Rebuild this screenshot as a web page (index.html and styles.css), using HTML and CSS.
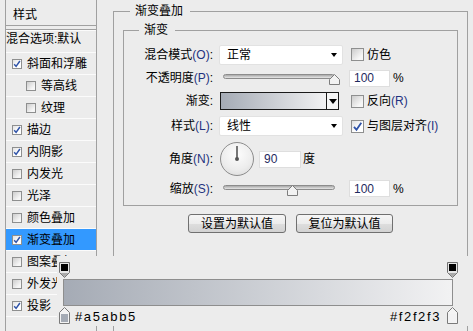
FILE: index.html
```html
<!DOCTYPE html>
<html lang="zh-CN">
<head>
    <meta charset="UTF-8" />
    <title>图层样式 - 渐变叠加</title>
    <link rel="stylesheet" href="styles.css">
</head>
<body>
<div class="dialog">
    <!-- Style list -->
    <ul class="style-list">
        <li class="item head">样式</li>
        <li class="item blend">混合选项:默认</li>
        <li class="item"><span class="cb on"><svg viewBox="0 0 8 8"><path d="M1.2 4.2l1.9 2.2L6.9 1" fill="none" stroke="#2f53a8" stroke-width="1.5"/></svg></span>斜面和浮雕</li>
        <li class="item sub"><span class="cb"></span>等高线</li>
        <li class="item sub"><span class="cb"></span>纹理</li>
        <li class="item"><span class="cb on"><svg viewBox="0 0 8 8"><path d="M1.2 4.2l1.9 2.2L6.9 1" fill="none" stroke="#2f53a8" stroke-width="1.5"/></svg></span>描边</li>
        <li class="item"><span class="cb on"><svg viewBox="0 0 8 8"><path d="M1.2 4.2l1.9 2.2L6.9 1" fill="none" stroke="#2f53a8" stroke-width="1.5"/></svg></span>内阴影</li>
        <li class="item"><span class="cb"></span>内发光</li>
        <li class="item"><span class="cb"></span>光泽</li>
        <li class="item"><span class="cb"></span>颜色叠加</li>
        <li class="item active"><span class="cb on"><svg viewBox="0 0 8 8"><path d="M1.2 4.2l1.9 2.2L6.9 1" fill="none" stroke="#2f53a8" stroke-width="1.5"/></svg></span>渐变叠加</li>
        <li class="item"><span class="cb"></span>图案叠加</li>
        <li class="item"><span class="cb"></span>外发光</li>
        <li class="item"><span class="cb on"><svg viewBox="0 0 8 8"><path d="M1.2 4.2l1.9 2.2L6.9 1" fill="none" stroke="#2f53a8" stroke-width="1.5"/></svg></span>投影</li>
    </ul>

    <!-- Settings -->
    <div class="settings">
        <fieldset class="group outer">
            <legend>渐变叠加</legend>
            <fieldset class="group inner">
                <legend>渐变</legend>

                <div class="row r-blend">
                    <span class="lbl">混合模式<span class="key">(O)</span>:</span>
                    <div class="select"><span>正常</span><i class="caret"></i></div>
                    <span class="check"><span class="box"></span>仿色</span>
                </div>

                <div class="row r-opacity">
                    <span class="lbl">不透明度<span class="key">(P)</span>:</span>
                    <div class="slider">
                        <div class="track"></div>
                        <svg class="thumb" style="left: 106px" width="11" height="11" viewBox="0 0 11 11"><path d="M.5 10.5v-5l5-5 5 5v5z" fill="#f2f2f2" stroke="#7d7d7d"/></svg>
                    </div>
                    <input class="num" type="text" value="100">
                    <span class="unit">%</span>
                </div>

                <div class="row r-grad">
                    <span class="lbl">渐变:</span>
                    <div class="grad-pick">
                        <div class="grad-swatch"></div>
                        <div class="grad-btn"><i class="caret big"></i></div>
                    </div>
                    <span class="check"><span class="box"></span>反向<span class="key">(R)</span></span>
                </div>

                <div class="row r-style">
                    <span class="lbl">样式<span class="key">(L)</span>:</span>
                    <div class="select"><span>线性</span><i class="caret"></i></div>
                    <span class="check"><span class="box on"><svg viewBox="0 0 11 11"><path d="M2 5.8l2.5 3L9.3 1.8" fill="none" stroke="#2f53a8" stroke-width="1.8"/></svg></span>与图层对齐<span class="key">(I)</span></span>
                </div>

                <div class="row r-angle">
                    <span class="lbl">角度<span class="key">(N)</span>:</span>
                    <div class="dial"></div>
                    <input class="num angle" type="text" value="90">
                    <span class="unit deg">度</span>
                </div>

                <div class="row r-scale">
                    <span class="lbl">缩放<span class="key">(S)</span>:</span>
                    <div class="slider">
                        <div class="track"></div>
                        <svg class="thumb" style="left: 64px" width="11" height="11" viewBox="0 0 11 11"><path d="M.5 10.5v-5l5-5 5 5v5z" fill="#f2f2f2" stroke="#7d7d7d"/></svg>
                    </div>
                    <input class="num" type="text" value="100">
                    <span class="unit">%</span>
                </div>
            </fieldset>

            <div class="buttons">
                <button class="btn set">设置为默认值</button>
                <button class="btn reset">复位为默认值</button>
            </div>
        </fieldset>
    </div>

    <!-- Gradient editor strip, drawn over the dialog -->
    <div class="grad-editor">
        <div class="stops top">
            <svg width="11" height="16" viewBox="0 0 11 16"><path d="M.5.5h10v10l-5 5-5-5z" fill="#e6e6e6" stroke="#707070"/><path d="M1.5 11h8l-4 4z" fill="#a8a8a8"/><rect x="2" y="2" width="7" height="7" fill="#000"/></svg>
            <svg width="11" height="16" viewBox="0 0 11 16"><path d="M.5.5h10v10l-5 5-5-5z" fill="#e6e6e6" stroke="#707070"/><path d="M1.5 11h8l-4 4z" fill="#a8a8a8"/><rect x="2" y="2" width="7" height="7" fill="#000"/></svg>
        </div>
        <div class="bar"></div>
        <div class="stops bottom">
            <svg width="11" height="17" viewBox="0 0 11 17"><path d="M5.5.5l5 5v11H.5v-11z" fill="#f4f4f4" stroke="#7a7a7a"/><rect x="2" y="7" width="7" height="8" fill="#a5abb5"/></svg>
            <span class="hex left">#a5abb5</span>
            <span class="hex right">#f2f2f3</span>
            <svg width="11" height="17" viewBox="0 0 11 17"><path d="M5.5.5l5 5v11H.5v-11z" fill="#f4f4f4" stroke="#7a7a7a"/><rect x="2" y="7" width="7" height="8" fill="#f2f2f3"/></svg>
        </div>
    </div>
</div>
</body>
</html>
```
FILE: styles.css
```css
* {
    box-sizing: border-box;
}

body {
    margin: 0;
    background: #ececec;
    font: 12px/16px "Liberation Sans", "Noto Sans CJK SC", sans-serif;
    color: #000;
    overflow: hidden;
}

.dialog {
    position: relative;
    display: flex;
    align-items: flex-start;
    height: 331px;
    padding-left: 5px;
}

/* ---- style list ---- */

.style-list {
    list-style: none;
    margin: 0;
    padding: 0;
    width: 92px;
    height: 340px;
    border-left: 1px solid #a0a0a0;
    border-right: 1px solid #a0a0a0;
    flex-shrink: 0;
}

.item {
    display: flex;
    align-items: center;
    height: 22px;
    padding-left: 6px;
    border-bottom: 1px solid #fbfbfb;
    white-space: nowrap;
    overflow: hidden;
}

.item.head {
    height: 26px;
    padding: 4px 0 0 7px;
    border-bottom: 1px solid #a0a0a0;
}

.item.blend {
    height: 24px;
    margin-top: 3px;
    padding: 1px 0 0 0;
    align-items: flex-start;
    border-top: 1px solid #a0a0a0;
    box-shadow: inset 0 1px #fbfbfb;
}

.item.sub {
    padding-left: 20px;
}

.item.active {
    background: #3399ff;
}

.cb {
    width: 10px;
    height: 10px;
    margin-right: 5px;
    border: 1px solid #8e8f8f;
    background: linear-gradient(135deg, #cdcdcd, #f6f6f6 75%);
    display: flex;
    align-items: center;
    justify-content: center;
}

.cb.on {
    background: linear-gradient(135deg, #e2e2e2, #fff 60%);
}

.cb svg {
    width: 8px;
    height: 8px;
}

/* ---- settings ---- */

.settings {
    margin-left: 16px;
    width: 355px;
    flex-shrink: 0;
}

.group {
    margin: 0;
    border: 1px solid #a0a0a0;
    min-width: 0;
}

.group legend {
    line-height: 16px;
}

.group.outer {
    margin-top: 3px;
    padding: 3px 9px 0;
    height: 340px;
}

.group.outer > legend {
    margin-left: 7px;
    padding: 0 7px 0 5px;
}

.group.inner {
    padding: 5px 0 6px;
}

.group.inner > legend {
    margin-left: 15px;
    padding: 0 7px 0 5px;
}

.row {
    display: flex;
    align-items: center;
    white-space: nowrap;
}

.r-blend { height: 23px; }
.r-opacity { height: 24px; }
.r-grad { height: 22px; }
.r-style { height: 28px; }
.r-angle { height: 38px; }
.r-scale { height: 21px; }

.lbl {
    width: 89px;
    margin-right: 6px;
    text-align: right;
}

.key {
    color: #1f3380;
}

.select {
    display: flex;
    align-items: center;
    justify-content: space-between;
    width: 124px;
    height: 20px;
    padding: 0 5px 0 7px;
    background: #fff;
    border: 1px solid #e2e2e2;
    border-radius: 2px;
}

.caret {
    width: 0;
    height: 0;
    border-left: 3px solid transparent;
    border-right: 3px solid transparent;
    border-top: 4px solid #000;
}

.caret.big {
    border-left-width: 4px;
    border-right-width: 4px;
    border-top-width: 5px;
}

.check {
    display: flex;
    align-items: center;
    margin-left: 8px;
}

.r-grad .check {
    margin-left: 12px;
}

.box {
    width: 13px;
    height: 13px;
    margin-right: 3px;
    border: 1px solid #8e8f8f;
    background: linear-gradient(135deg, #cbcbcb, #f7f7f7 75%);
    display: flex;
    align-items: center;
    justify-content: center;
}

.box.on {
    background: linear-gradient(135deg, #dedede, #fff 60%);
}

.box svg {
    width: 11px;
    height: 11px;
}

.slider {
    position: relative;
    width: 117px;
    height: 14px;
    margin-left: 4px;
    margin-top: 2px;
}

.track {
    width: 112px;
    height: 5px;
    margin-top: 2px;
    border: 1px solid #8c8c8c;
    border-radius: 3px;
    background: linear-gradient(#a9a9a9, #e6e6e6);
}

.thumb {
    position: absolute;
    top: 2px;
}

.num {
    width: 41px;
    height: 17px;
    margin: 0 0 0 9px;
    padding: 0 4px;
    border: 1px solid #dedede;
    background: #fff;
    font: inherit;
    color: #1f2a60;
    outline: none;
}

.unit {
    margin-left: 3px;
}

.grad-pick {
    display: flex;
    width: 119px;
    height: 18px;
    margin-left: 1px;
    border: 1px solid #1a1a1a;
}

.grad-swatch {
    flex: 1;
    background: linear-gradient(90deg, #a5abb5, #f2f2f3);
}

.grad-btn {
    width: 12px;
    display: flex;
    align-items: center;
    justify-content: center;
    border-left: 1px solid #1a1a1a;
    background: #f6f6f6;
}

.dial {
    position: relative;
    width: 34px;
    height: 34px;
    margin-left: 1px;
    border: 1px solid #8c8c8c;
    border-radius: 50%;
    background: radial-gradient(circle at 50% 35%, #fdfdfd, #ececec 60%, #d6d6d6);
}

.dial::before {
    content: "";
    position: absolute;
    left: 15px;
    top: 3px;
    width: 2px;
    height: 13px;
    background: #777;
}

.dial::after {
    content: "";
    position: absolute;
    left: 14px;
    top: 14px;
    width: 4px;
    height: 4px;
    border-radius: 50%;
    background: #555;
}

.num.angle {
    width: 42px;
    margin-left: 5px;
}

.unit.deg {
    margin-left: 2px;
}

.buttons {
    display: flex;
    justify-content: center;
    gap: 10px;
    margin-top: 8px;
}

.btn {
    height: 19px;
    padding: 0;
    border: 1px solid #707070;
    border-radius: 3px;
    background: linear-gradient(#f6f6f6, #ececec 50%, #dedede 51%, #d2d2d2);
    font: inherit;
    color: #000;
}

.btn.set { width: 98px; }
.btn.reset { width: 97px; }

/* ---- gradient editor strip ---- */

.grad-editor {
    position: absolute;
    left: 57px;
    top: 256px;
    width: 416px;
    height: 70px;
    padding: 6px 15px 0 2px;
    background: #ececec;
}

.stops {
    display: flex;
    justify-content: space-between;
}

.stops svg {
    display: block;
}

.bar {
    width: 390px;
    height: 27px;
    margin: 1px 0 0 4px;
    border: 1px solid #8e8e8e;
    background: linear-gradient(90deg, #a5abb5, #f2f2f3);
}

.stops.bottom {
    align-items: flex-end;
    margin-top: 1px;
}

.hex {
    font: 13px/14px "Liberation Sans", sans-serif;
    letter-spacing: 1.6px;
}

.hex.left {
    margin-left: 5px;
    margin-right: auto;
}

.hex.right {
    margin-right: 6px;
}
```
